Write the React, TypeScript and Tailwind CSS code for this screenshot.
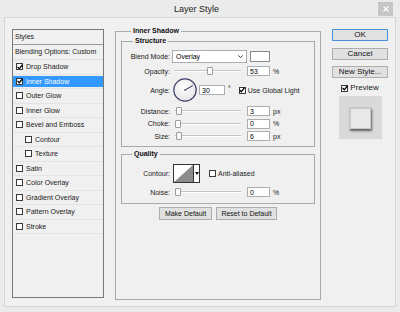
import React from "react";

type Item = { label: string; checked?: boolean; selected?: boolean; indent?: boolean };

const items: Item[] = [
  { label: "Drop Shadow", checked: true },
  { label: "Inner Shadow", checked: true, selected: true },
  { label: "Outer Glow" },
  { label: "Inner Glow" },
  { label: "Bevel and Emboss" },
  { label: "Contour", indent: true },
  { label: "Texture", indent: true },
  { label: "Satin" },
  { label: "Color Overlay" },
  { label: "Gradient Overlay" },
  { label: "Pattern Overlay" },
  { label: "Stroke" },
];

function Check({ checked }: { checked?: boolean }) {
  return (
    <span className="w-[7px] h-[7px] border border-[#3a3a3a] bg-white flex items-center justify-center shrink-0">
      {checked && (
        <svg viewBox="0 0 7 7" className="w-[6px] h-[6px] overflow-visible">
          <path d="M0.6 3.4 L2.6 5.6 L6.4 0.9" stroke="#000" strokeWidth="1.5" fill="none" />
        </svg>
      )}
    </span>
  );
}

function Slider({ pos }: { pos: number }) {
  return (
    <div className="relative ml-[5px] w-[66px] h-[10px] shrink-0">
      <div className="absolute left-0 right-0 top-[4px] h-[2px] border-t border-[#c4c4c4] border-b border-b-white" />
      <div
        className="absolute top-[1px] w-[6px] h-[8px] bg-[#fbfbfb] border border-[#9c9c9c] rounded-[1px]"
        style={{ left: `${pos * 0.6}px` }}
      />
    </div>
  );
}

function Field({ value, w = "w-[23px]", ml = "ml-[6px]" }: { value: string; w?: string; ml?: string }) {
  return (
    <div className={`${ml} ${w} h-[10px] bg-white border border-[#abadb3] flex items-center pl-[2px] text-[7px] leading-none shrink-0`}>
      {value}
    </div>
  );
}

function Label({ text }: { text: string }) {
  return <div className="w-[48px] text-right text-[7px] leading-none text-[#1a1a1a] shrink-0">{text}</div>;
}

function SliderRow({ label, value, pos, unit }: { label: string; value: number; pos: number; unit: string }) {
  return (
    <div className="flex items-center h-[10px]">
      <Label text={label} />
      <Slider pos={pos} />
      <Field value={String(value)} />
      <div className="ml-[3px] text-[7px] leading-none text-[#1a1a1a]">{unit}</div>
    </div>
  );
}

function Btn({ children, w, def }: { children: React.ReactNode; w: string; def?: boolean }) {
  return (
    <div
      className={`${w} h-[12px] flex items-center justify-center border ${
        def ? "border-[#4a90d9]" : "border-[#adadad]"
      } bg-[#e1e1e1] text-[8px] leading-none text-[#111]`}
    >
      {children}
    </div>
  );
}

export default function App() {
  return (
    <div className="w-[400px] h-[312px] bg-[#ebebeb] overflow-hidden text-black font-['Liberation_Sans',Arial,sans-serif]">
      {/* title bar */}
      <div className="h-[17px] flex">
        <div className="flex-1" />
        <div className="text-[9px] leading-[17px] pt-[1px] text-[#222]">Layer Style</div>
        <div className="flex-1 flex justify-end pr-[7px]">
          <div className="mt-[2px] w-[15px] h-[14px] bg-[#c6c6c6] flex items-center justify-center">
            <svg viewBox="0 0 6 6" className="w-[6px] h-[6px]">
              <path d="M0.5 0.5 L5.5 5.5 M5.5 0.5 L0.5 5.5" stroke="#fff" strokeWidth="1.1" />
            </svg>
          </div>
        </div>
      </div>

      {/* body */}
      <div className="ml-[4px] w-[392px] h-[290px] border border-[#d6d6d6] bg-[#f0f0f0] flex items-start pl-[7px] pt-[11px]">
        {/* styles list */}
        <div className="w-[92px] h-[269px] border border-[#787878] flex flex-col text-[7px] leading-none shrink-0">
          <div className="h-[14.5px] border-b border-[#9a9a9a] flex items-center px-[2px] text-[#1a1a1a]">Styles</div>
          <div className="h-[15.5px] border-b border-[#dedede] flex items-center px-[2px] text-[#1a1a1a]">
            Blending Options: Custom
          </div>
          {items.map((it) => (
            <div key={it.label} className="h-[14.5px] border-b border-[#e4e4e4] py-[1.5px]">
              <div
                className={`h-full flex items-center gap-[3px] ${it.indent ? "pl-[12px]" : "pl-[3px]"} ${
                  it.selected ? "bg-[#3399ff] text-white" : "text-[#1a1a1a]"
                }`}
              >
                <Check checked={it.checked} />
                <span>{it.label}</span>
              </div>
            </div>
          ))}
        </div>

        {/* center panel */}
        <div className="ml-[11px] -mt-[2px] w-[206px] shrink-0">
          <fieldset className="border border-[#a9a9a9] h-[273px] px-[5px]">
            <legend className="ml-[10px] px-[2px] font-bold text-[7px] leading-[8px] text-[#111]">Inner Shadow</legend>

            {/* Structure */}
            <fieldset className="mt-[2px] border border-[#a9a9a9] pt-[5px] pb-[5px]">
              <legend className="ml-[11px] px-[2px] font-bold text-[7px] leading-[8px] text-[#111]">Structure</legend>
              <div className="flex flex-col">
                <div className="flex items-center h-[13px]">
                  <Label text="Blend Mode:" />
                  <div className="ml-[2px] w-[75px] h-[13px] bg-white border border-[#abadb3] flex items-center justify-between pl-[3px] pr-[3px] text-[7px] leading-none">
                    <span>Overlay</span>
                    <svg viewBox="0 0 5 3" className="w-[5px] h-[3px]">
                      <path d="M0.4 0.4 L2.5 2.5 L4.6 0.4" stroke="#222" strokeWidth="0.9" fill="none" />
                    </svg>
                  </div>
                  <div className="ml-[3px] w-[20px] h-[11px] bg-white border border-[#8a8a8a]" />
                </div>

                <div className="mt-[3px]">
                  <SliderRow label="Opacity:" value={53} pos={53} unit="%" />
                </div>

                <div className="mt-[2px] flex items-center h-[24px]">
                  <Label text="Angle:" />
                  <svg viewBox="0 0 24 24" className="ml-[3px] w-[24px] h-[24px] shrink-0">
                    <defs>
                      <radialGradient id="dial" cx="0.45" cy="0.4" r="0.6">
                        <stop offset="0" stopColor="#ffffff" />
                        <stop offset="1" stopColor="#e6e6ea" />
                      </radialGradient>
                    </defs>
                    <circle cx="12" cy="12" r="11.2" fill="url(#dial)" stroke="#3b3b6b" strokeWidth="1.2" />
                    <path d="M12 12 L19.8 7.5" stroke="#2a2a4a" strokeWidth="1" />
                    <circle cx="12" cy="12" r="0.8" fill="#2a2a4a" />
                  </svg>
                  <Field value="30" w="w-[26px]" ml="ml-[2px]" />
                  <div className="ml-[3px] text-[7px] leading-none self-start mt-[7px]">°</div>
                  <div className="ml-[8px] flex items-center gap-[2px]">
                    <Check checked />
                    <span className="text-[7px] leading-none text-[#1a1a1a]">Use Global Light</span>
                  </div>
                </div>

                <div className="mt-[4px] flex flex-col gap-[2.5px]">
                  <SliderRow label="Distance:" value={3} pos={1} unit="px" />
                  <SliderRow label="Choke:" value={0} pos={0} unit="%" />
                  <SliderRow label="Size:" value={6} pos={2} unit="px" />
                </div>
              </div>
            </fieldset>

            {/* Quality */}
            <fieldset className="mt-[3px] border border-[#a9a9a9] pt-[6px] pb-[6px]">
              <legend className="ml-[10px] px-[2px] font-bold text-[7px] leading-[8px] text-[#111]">Quality</legend>
              <div className="flex items-center h-[19px]">
                <Label text="Contour:" />
                <div className="ml-[3px] w-[27px] h-[19px] border border-[#333] flex bg-white shrink-0">
                  <svg viewBox="0 0 19 17" preserveAspectRatio="none" className="w-[19px] h-[17px]">
                    <polygon points="0,17 19,0 19,17" fill="#8c8c8c" />
                  </svg>
                  <div className="flex-1 border-l border-[#333] flex items-center justify-center">
                    <svg viewBox="0 0 4 3" className="w-[4px] h-[3px]">
                      <polygon points="0,0 4,0 2,3" fill="#111" />
                    </svg>
                  </div>
                </div>
                <div className="ml-[9px] flex items-center gap-[2px]">
                  <Check />
                  <span className="text-[7px] leading-none text-[#1a1a1a]">Anti-aliased</span>
                </div>
              </div>
              <div className="mt-[4px]">
                <SliderRow label="Noise:" value={0} pos={0} unit="%" />
              </div>
            </fieldset>

            <div className="mt-[3px] flex justify-center gap-[4px]">
              <div className="w-[53px] h-[13px] flex items-center justify-center border border-[#adadad] bg-[#e1e1e1] text-[7px] leading-none text-[#111]">
                Make Default
              </div>
              <div className="w-[61px] h-[13px] flex items-center justify-center border border-[#adadad] bg-[#e1e1e1] text-[7px] leading-none text-[#111]">
                Reset to Default
              </div>
            </div>
          </fieldset>
        </div>

        {/* right column */}
        <div className="ml-[11px] w-[56px] flex flex-col items-center shrink-0">
          <Btn w="w-[56px]" def>
            OK
          </Btn>
          <div className="mt-[6.5px]">
            <Btn w="w-[56px]">Cancel</Btn>
          </div>
          <div className="mt-[6px]">
            <Btn w="w-[56px]">New Style...</Btn>
          </div>
          <div className="mt-[6.5px] h-[8px] flex items-center gap-[2px]">
            <Check checked />
            <span className="text-[8px] leading-none text-[#1a1a1a]">Preview</span>
          </div>
          <div className="mt-[4px] w-[43px] h-[43px] bg-[#d9d9d9] flex items-center justify-center">
            <div className="w-[22px] h-[22px] bg-[#e9e9e9] border border-[#c8c8c8] shadow-[1px_2px_2px_rgba(0,0,0,0.55),inset_1px_1px_1px_rgba(0,0,0,0.15)]" />
          </div>
        </div>
      </div>
    </div>
  );
}
